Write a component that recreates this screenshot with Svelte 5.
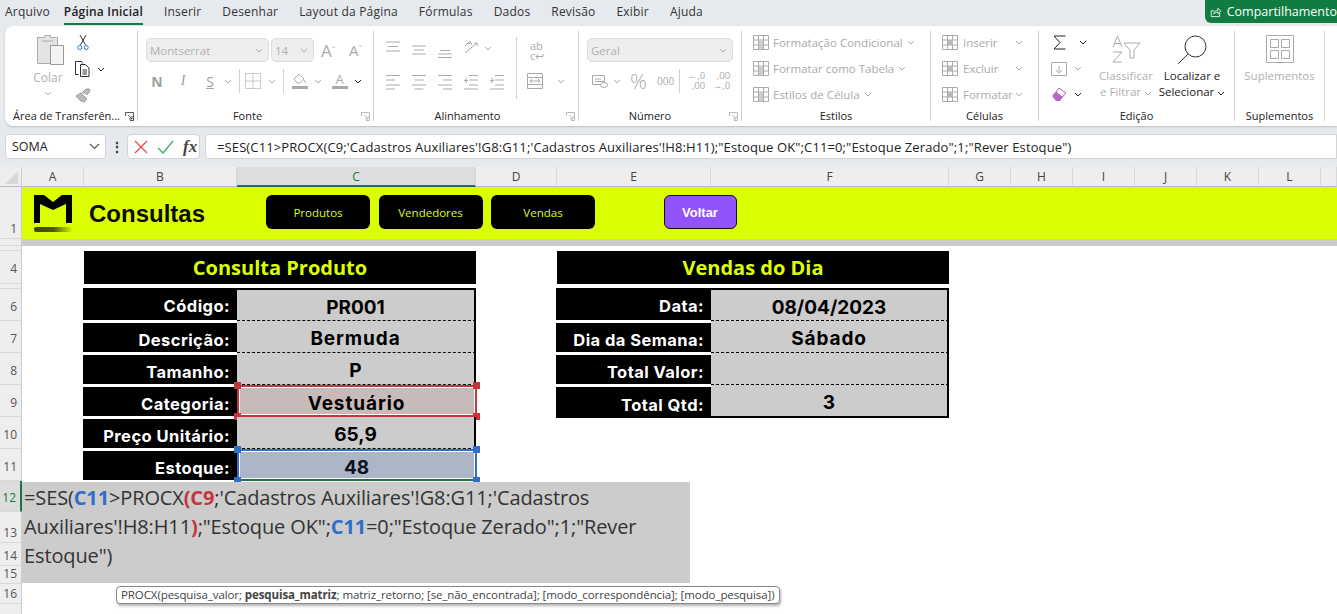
<script>
  const tabs = ['Arquivo', 'Página Inicial', 'Inserir', 'Desenhar', 'Layout da Página', 'Fórmulas', 'Dados', 'Revisão', 'Exibir', 'Ajuda']
  const cols = ['A', 'B', 'C', 'D', 'E', 'F', 'G', 'H', 'I', 'J', 'K', 'L']
  const rowHeads = ['1', '', '', '4', '', '6', '7', '8', '9', '10', '11', '12', '13', '14', '15', '16', '17']
  const midRows = ['4', '6', '7', '8', '9', '10', '11', '12']

  const produto = [
    { row: 6, label: 'Código:', value: 'PR001' },
    { row: 7, label: 'Descrição:', value: 'Bermuda', word: true },
    { row: 8, label: 'Tamanho:', value: 'P' },
    { row: 9, label: 'Categoria:', value: 'Vestuário', word: true, ref: 'red' },
    { row: 10, label: 'Preço Unitário:', value: '65,9' },
    { row: 11, label: 'Estoque:', value: '48', ref: 'blue' }
  ]
  const vendas = [
    { row: 6, label: 'Data:', value: '08/04/2023' },
    { row: 7, label: 'Dia da Semana:', value: 'Sábado', word: true },
    { row: 8, label: 'Total Valor:', value: '' },
    { row: 9, label: 'Total Qtd:', value: '3' }
  ]

  const alignTop = ['M1 4h14M3 8.500h10M1 13h14', 'M1 8h14M3 12h10M1 16h14', 'M3 12.500h10M1 16h14M1 19.500h14']
  const alignSide = ['M1 3.500h14M1 8h9M1 13h14M1 17h9', 'M1 3.500h14M3.500 8h9M1 13h14M3.500 17h9', 'M1 3.500h14M6 8h9M1 13h14M6 17h9',
    'M6 3.500h9M6 8h9M6 13h9M1 17h14M4 6L1.500 8.500 4 11M1.500 8.500h3.500', 'M6 3.500h9M6 8h9M6 13h9M1 17h14M2 6l2.500 2.500L2 11M1 8.500h3.500']
  const stylesList = ['Formatação Condicional', 'Formatar como Tabela', 'Estilos de Célula']
  const cellsList = ['Inserir', 'Excluir', 'Formatar']
</script>

{#snippet chev(dark = false)}
  <svg class="chev" class:dark width="8" height="5" viewBox="0 0 8 5"><path d="M1 1l3 3 3-3" fill="none" stroke="currentColor" stroke-width="1" /></svg>
{/snippet}

{#snippet launcher(dark = false)}
  <svg class="launcher" width="9" height="9" viewBox="0 0 9 9"><path d="M.5 4V.5H8.500V8.500H5M3 3l4 4M7 4v3H4" fill="none" stroke={dark ? '#555' : '#bbb'} /></svg>
{/snippet}

<div class="page">
  <header class="tabs">
    {#each tabs as tab, i}
      <span class="tab" class:active={i === 1}>{tab}</span>
    {/each}
    <button class="share">
      <svg width="14" height="14" viewBox="0 0 14 14" fill="none" stroke="#fff"><path d="M5 5.500H1.500v7h10V8M4.500 9.500C5 6.500 7 5 9.500 5V2.500L13 6 9.500 9V7C7.500 7 6 8 4.500 9.500z" /></svg>
      Compartilhamento
    </button>
  </header>

  <section class="ribbon">
    <div class="group g-clip">
      <div class="content clip">
        <div class="paste">
          <svg width="28" height="32" viewBox="0 0 28 32" fill="none" stroke="#aaa"><path d="M.5 3.500h7v-2h6v2h7v26H.5z" fill="#e4e4e4" /><path d="M5 7h11" /><path d="M13.500 11.500h13v19h-13z" fill="#f4f4f4" stroke="#999" /></svg>
          <span>Colar</span>
          {@render chev()}
        </div>
        <div class="clip-tools">
          <svg class="scissors" width="12" height="17" viewBox="0 0 12 17" fill="none" stroke="#333"><path d="M3 1l5.500 10M9 1L3.500 11" /><circle cx="2.800" cy="13.500" r="2" stroke="#2b79c2" /><circle cx="9.200" cy="13.500" r="2" stroke="#2b79c2" /></svg>
          <div class="with-chev">
            <svg width="15" height="16" viewBox="0 0 15 16" fill="none" stroke="#333"><path d="M3.500 13.500h-3V.5h6l1 2" /><path d="M5.500 3.500h5l3.500 3.500v8.500H5.500zM7.500 9h4.500M7.500 11h4.500M7.500 13h4.500" /></svg>
            {@render chev(true)}
          </div>
          <svg width="17" height="16" viewBox="0 0 17 16" fill="#bbb" stroke="#999"><path d="M1 9l5-3 6 6-3 3C7 15 3 12 1 9zM7 6l4-4 3 0 1 2-3 4" /></svg>
        </div>
      </div>
      <div class="label">Área de Transferên...</div>
      {@render launcher(true)}
    </div>

    <div class="group g-font">
      <div class="content font-rows">
        <div class="fr">
          <div class="select s-font">Montserrat {@render chev()}</div>
          <div class="select s-size">14 {@render chev()}</div>
          <span class="grow-a">A<sup>ˆ</sup></span>
          <span class="grow-a small">A<sup>ˇ</sup></span>
        </div>
        <div class="fr tools">
          <b class="t-n">N</b>
          <i class="t-i">I</i>
          <u class="t-s">S</u>
          {@render chev()}
          <span class="vsep"></span>
          <svg class="borders" width="16" height="16" viewBox="0 0 16 16" fill="none" stroke="#999" stroke-dasharray="1 1"><path d="M.5.500h15v15H.5zM8 .5v15M.5 8h15" /></svg>
          {@render chev()}
          <span class="vsep"></span>
          <span class="swatch">
            <svg width="14" height="12" viewBox="0 0 14 12" fill="none" stroke="#aaa"><path d="M1 6l5-5 5 5-4 4H4zM11 7l2 3" /></svg>
            <em></em>
          </span>
          {@render chev()}
          <span class="swatch text">A<em></em></span>
          {@render chev(true)}
        </div>
      </div>
      <div class="label">Fonte</div>
      {@render launcher()}
    </div>

    <div class="group g-align">
      <div class="content align-grid">
        <div class="ar">
          {#each alignTop as d}
            <svg width="16" height="20" viewBox="0 0 16 20" fill="none" stroke="#aaa"><path {d} /></svg>
          {/each}
          <svg width="16" height="20" viewBox="0 0 16 20" fill="none" stroke="#aaa"><path d="M2 15L14 5M14 5h-3M14 5v3M2 8l5-5 2 4M3.500 5.500h4" /></svg>
          {@render chev()}
        </div>
        <div class="ar">
          {#each alignSide as d}
            <svg width="16" height="20" viewBox="0 0 16 20" fill="none" stroke="#aaa"><path {d} /></svg>
          {/each}
        </div>
        <div class="align-side">
          <span class="wrap">ab<br />c↩</span>
          <div class="with-chev merge">
            <svg width="16" height="16" viewBox="0 0 16 16" fill="none" stroke="#aaa"><path d="M.5.500h15v15H.5zM.5 4.500h15M.5 11.500h15M3 8h10M5 6L3 8l2 2M11 6l2 2-2 2" /></svg>
            {@render chev()}
          </div>
        </div>
      </div>
      <div class="label">Alinhamento</div>
      {@render launcher()}
    </div>

    <div class="group g-num">
      <div class="content num-rows">
        <div class="select s-geral">Geral {@render chev()}</div>
        <div class="nr">
          <svg width="16" height="13" viewBox="0 0 16 13" fill="none" stroke="#aaa"><path d="M.5.500h12v9H.5z" /><path d="M3 6.500h9M3 4h6" /><ellipse cx="12" cy="10" rx="3.500" ry="2.500" fill="#fff" /></svg>
          {@render chev()}
          <span class="pct">%</span>
          <span class="mil">000</span>
          <span class="vsep"></span>
          <span class="dec"><i>←,0</i><i>,00</i></span>
          <span class="dec"><i>,00</i><i>→,0</i></span>
        </div>
      </div>
      <div class="label">Número</div>
      {@render launcher()}
    </div>

    <div class="group g-styles">
      <div class="content list">
        {#each stylesList as item}
          <div class="li">
            <svg width="16" height="15" viewBox="0 0 16 15" fill="none" stroke="#aaa"><path d="M.5.500h15v14H.5zM.5 5h15M.5 10h15M5.500.5v14M10.500.5v14" /><path d="M6 5.500h4v9H6z" fill="#ccc" stroke="none" /></svg>
            <span>{item}</span>
            {@render chev()}
          </div>
        {/each}
      </div>
      <div class="label">Estilos</div>
    </div>

    <div class="group g-cells">
      <div class="content list">
        {#each cellsList as item}
          <div class="li">
            <svg width="16" height="15" viewBox="0 0 16 15" fill="none" stroke="#aaa"><path d="M.5.500h15v14H.5zM.5 5h15M.5 10h15M5.500.5v14M10.500.5v14" /><path d="M6 5h5v5H6z" fill="#bbb" stroke="none" /></svg>
            <span class="cell-name">{item}</span>
            {@render chev()}
          </div>
        {/each}
      </div>
      <div class="label">Células</div>
    </div>

    <div class="group g-edit">
      <div class="content edit">
        <div class="edit-tools">
          <div class="with-chev sum">
            <svg width="13" height="15" viewBox="0 0 13 15" fill="none" stroke="#222"><path d="M12.500 1H1l6 6.500L1 14h11.500" /></svg>
            {@render chev(true)}
          </div>
          <div class="with-chev">
            <svg width="16" height="14" viewBox="0 0 16 14" fill="none" stroke="#aaa"><path d="M.5.500h15v13H.5zM8 4v7M5 8l3 3 3-3" /></svg>
            {@render chev()}
          </div>
          <div class="with-chev">
            <svg width="16" height="15" viewBox="0 0 16 15"><path d="M1 9l7-8 7 5-6 8H5z" fill="#b565c4" /><path d="M5 5l6 5 4-4-7-5z" fill="#fff" stroke="#b565c4" /></svg>
            {@render chev(true)}
          </div>
        </div>
        <div class="big off">
          <svg width="29" height="28" viewBox="0 0 29 28" fill="none" stroke="#aaa"><path d="M1 12L5.500 1 10 12M2.500 8.500h6M1 17h9L1 27h9" /><path d="M12 8h16l-6 7v8h-4v-8z" /></svg>
          <span>Classificar<br />e Filtrar {@render chev()}</span>
        </div>
        <div class="big find">
          <svg width="30" height="30" viewBox="0 0 30 30" fill="none" stroke="#333"><circle cx="18.500" cy="11.500" r="10.500" /><path d="M11 19L1 29" /></svg>
          <span>Localizar e<br />Selecionar {@render chev(true)}</span>
        </div>
      </div>
      <div class="label">Edição</div>
    </div>

    <div class="group g-add">
      <div class="content big off">
        <svg width="28" height="28" viewBox="0 0 28 28" fill="none" stroke="#aaa"><path d="M.5.500h27v27H.5z" /><path d="M4.500 4.500h8v8h-8zM15.500 4.500h8v8h-8zM4.500 15.500h8v8h-8zM15.500 15.500h8v8h-8z" /></svg>
        <span>Suplementos</span>
      </div>
      <div class="label">Suplementos</div>
    </div>
  </section>

  <section class="formula">
    <div class="namebox">SOMA
      <svg width="11" height="7" viewBox="0 0 11 7"><path d="M1 1l4.500 4.500L10 1" fill="none" stroke="#555" stroke-width="1.200" /></svg>
    </div>
    <span class="dots">⋮</span>
    <div class="fx-box">
      <svg width="14" height="14" viewBox="0 0 14 14"><path d="M1 1l12 12M13 1L1 13" stroke="#e5484d" stroke-width="1.200" /></svg>
      <svg width="17" height="14" viewBox="0 0 17 14"><path d="M1 8l5 5L16 1" fill="none" stroke="#3ea862" stroke-width="1.200" /></svg>
      <span class="fx">fx</span>
    </div>
    <div class="input">=SES(C11&gt;PROCX(C9;'Cadastros Auxiliares'!G8:G11;'Cadastros Auxiliares'!H8:H11);"Estoque OK";C11=0;"Estoque Zerado";1;"Rever Estoque")</div>
  </section>

  <section class="sheet">
    <div class="corner"><svg width="16" height="16" viewBox="0 0 16 16"><path d="M16 3v13H3z" fill="#d8d8d8" /></svg></div>
    {#each cols as col, i}
      <div class="colhead" class:current={col === 'C'} style="grid-column: {i + 2}">{col}</div>
    {/each}
    <div class="colhead" style="grid-column: 14"></div>

    {#each rowHeads as head, i}
      <div class="rowhead" class:editing={head === '12'} class:mid={midRows.includes(head)} style="grid-row: {i + 2}">{head}</div>
    {/each}

    <div class="banner">
      <svg class="logo" width="40" height="38" viewBox="0 0 40 38">
        <defs>
          <linearGradient id="logo-shade">
            <stop offset="0" stop-color="#3f4600" />
            <stop offset=".5" stop-color="#4d5600" />
            <stop offset="1" stop-color="#dcff00" />
          </linearGradient>
        </defs>
        <path d="M1 0h10l9 7 9-7h10v28h-6V9L20 15 7 9v19H1z" fill="#000" />
        <rect x="1" y="32" width="39" height="5" rx="2" fill="url(#logo-shade)" />
      </svg>
      <h1>Consultas</h1>
      <button class="nav first">Produtos</button>
      <button class="nav">Vendedores</button>
      <button class="nav">Vendas</button>
      <button class="back">Voltar</button>
    </div>
    <div class="band"></div>

    <div class="title t-left">Consulta Produto</div>
    <div class="title t-right">Vendas do Dia</div>

    {#each produto as item, i}
      <div class="lbl" class:first={i === 0} style="grid-row: {item.row + 1}; grid-column: 3">{item.label}</div>
      <div class="val {item.ref ?? ''}" class:first={i === 0} class:word={item.word} style="grid-row: {item.row + 1}; grid-column: 4">
        {item.value}
        {#if item.ref}
          <i class="h tl"></i><i class="h tr"></i><i class="h bl"></i><i class="h br"></i>
        {/if}
      </div>
    {/each}

    {#each vendas as item, i}
      <div class="lbl" class:first={i === 0} class:last={i === vendas.length - 1} style="grid-row: {item.row + 1}; grid-column: 6">{item.label}</div>
      <div class="val" class:first={i === 0} class:last={i === vendas.length - 1} class:word={item.word} style="grid-row: {item.row + 1}; grid-column: 7">{item.value}</div>
    {/each}

    <div class="editor">=SES(<b class="blue">C11</b>&gt;PROCX<b class="red">(C9</b>;'Cadastros Auxiliares'!G8:G11;'Cadastros Auxiliares'!H8:H11<b class="red">)</b>;"Estoque OK";<b class="blue">C11</b>=0;"Estoque Zerado";1;"Rever Estoque")</div>
    <div class="tip">PROCX(pesquisa_valor; <b>pesquisa_matriz</b>; matriz_retorno; [se_não_encontrada]; [modo_correspondência]; [modo_pesquisa])</div>
  </section>
</div>

<style>
  :global(body) {
    overflow: hidden;
    background: #fff;
  }

  .page {
    width: 1337px;
    height: 614px;
    overflow: hidden;
    background: #e6e9ee;
    font-family: "Open Sans", "Noto Sans", sans-serif;
    font-size: 12px;
    color: #222;
  }

  button {
    font-family: inherit;
    border: none;
    cursor: pointer;
  }

  .tabs {
    display: flex;
    align-items: flex-start;
    gap: 21px;
    height: 26px;
    padding-left: 5px;
    box-sizing: border-box;
  }

    .tab {
      height: 23px;
      line-height: 24px;
      letter-spacing: .2px;
      color: #333;
      white-space: nowrap;
    }

    .tab.active {
      margin-left: -7px;
      font-weight: 600;
      border-bottom: 2px solid #107c41;
      color: #222;
    }

  .share {
    display: flex;
    align-items: center;
    gap: 5px;
    margin-left: auto;
    height: 23px;
    width: 132px;
    padding: 0 0 0 5px;
    white-space: nowrap;
    color: #fff;
    font-size: 12.500px;
    background: #107c41;
    border-radius: 0 0 0 6px;
  }

  .ribbon {
    display: flex;
    height: 100px;
    margin-left: 5px;
    padding: 5px 0;
    box-sizing: border-box;
    background: #fff;
    border-radius: 8px 0 0 8px;
    box-shadow: 0 1px 2px rgba(0, 0, 0, .2);
  }

    .group {
      position: relative;
      flex: none;
      display: flex;
      flex-direction: column;
      box-sizing: border-box;
      height: 90px;
      border-right: 1px solid #d0d0d0;
    }

    .content {
      flex: 1;
      min-height: 0;
    }

    .label {
      height: 12px;
      line-height: 12px;
      margin-bottom: -1px;
      text-align: center;
      font-size: 11px;
      color: #222;
      white-space: nowrap;
    }

    .launcher {
      position: absolute;
      right: 3px;
      bottom: 0;
    }

    .chev {
      flex: none;
      color: #aaa;
    }

    .chev.dark {
      color: #222;
    }

    .with-chev {
      display: flex;
      align-items: center;
      gap: 7px;
    }

    .select {
      display: flex;
      align-items: center;
      justify-content: space-between;
      box-sizing: border-box;
      height: 24px;
      padding: 0 5px 0 3px;
      background: #eee;
      border: 1px solid #dcdcdc;
      border-radius: 5px;
      color: #b0b0b0;
      font-size: 11.500px;
    }

    .vsep {
      flex: none;
      width: 1px;
      height: 24px;
      background: #d0d0d0;
    }

  .g-clip {
    width: 133px;
  }

  .clip {
    display: flex;
    padding: 3px 0 0 32px;
  }

    .paste {
      display: flex;
      flex-direction: column;
      align-items: center;
      width: 28px;
      color: #b0b0b0;
    }

    .paste span {
      margin: 5px 6px 6px 0;
      line-height: 14px;
    }

    .paste .chev {
      margin-right: 6px;
    }

    .clip-tools {
      display: flex;
      flex-direction: column;
      gap: 10px;
      margin-left: 10px;
    }

    .scissors {
      margin-left: 2px;
    }

  .g-clip .label {
    text-align: left;
    padding-left: 8px;
  }

  .g-font {
    width: 236px;
  }

    .g-font .label {
      padding-right: 16px;
    }

  .font-rows {
    display: flex;
    flex-direction: column;
    gap: 7px;
    padding: 7px 0 0 8px;
  }

    .fr {
      display: flex;
      align-items: center;
      height: 24px;
    }

    .s-font {
      width: 123px;
    }

    .s-size {
      width: 43px;
      margin-left: 2px;
    }

    .grow-a {
      margin-left: 7px;
      width: 28px;
      font-size: 17px;
      color: #aaa;
    }

    .grow-a.small {
      margin-left: 0;
      font-size: 15px;
      width: 20px;
    }

    .grow-a sup {
      font-size: 9px;
      vertical-align: 3px;
    }

    .tools b,
    .tools i,
    .tools u {
      width: 14px;
      font-size: 14px;
      color: #a0a0a0;
      text-align: center;
    }

    .t-n {
      margin-left: 4px;
    }

    .t-i {
      margin-left: 12px;
      font-family: "Liberation Serif", serif;
    }

    .t-s {
      margin-left: 13px;
    }

    .tools .chev,
    .tools .vsep {
      margin-left: 7px;
    }

    .borders {
      flex: none;
      margin-left: 5px;
    }

    .swatch {
      display: flex;
      flex-direction: column;
      align-items: center;
      width: 15px;
      margin-left: 8px;
      line-height: 12px;
      color: #aaa;
      font-size: 13px;
    }

    .swatch.text {
      margin-left: 10px;
    }

    .swatch em {
      display: block;
      width: 16px;
      height: 3px;
      margin-top: 1px;
      background: #aaa;
    }

  .g-align {
    width: 205px;
  }

    .g-align .label {
      padding-right: 17px;
    }

  .align-grid {
    display: grid;
    grid-template-columns: 131px 1fr;
    grid-template-rows: 34px 30px;
    padding: 7px 0 0 11px;
  }

    .ar {
      display: flex;
      align-items: flex-start;
      gap: 10px;
    }

    .ar:first-child .chev {
      margin: 8px 0 0 -5px;
    }

    .align-side {
      grid-column: 2;
      grid-row: 1 / 3;
      display: flex;
      flex-direction: column;
      gap: 12px;
      margin-top: -1px;
      padding-left: 10px;
      height: 62px;
      border-left: 1px solid #d0d0d0;
      color: #aaa;
    }

    .wrap {
      height: 20px;
      margin: 4px 0 0 3px;
      font-size: 11px;
      line-height: 10px;
    }

    .merge {
      gap: 14px;
    }

  .g-num {
    width: 163px;
  }

    .g-num .label {
      padding-right: 20px;
    }

  .num-rows {
    display: flex;
    flex-direction: column;
    gap: 7px;
    padding: 7px 8px 0 8px;
  }

    .s-geral {
      width: 146px;
    }

    .nr {
      display: flex;
      align-items: center;
      height: 24px;
      padding-left: 5px;
      color: #aaa;
    }

    .nr .chev {
      margin-left: 5px;
    }

    .pct {
      width: 18px;
      margin-left: 9px;
      font-size: 21px;
      font-weight: 300;
    }

    .mil {
      margin-left: 9px;
      font-size: 10px;
    }

    .nr .vsep {
      margin-left: 5px;
    }

    .dec {
      display: flex;
      flex-direction: column;
      margin-left: 5px;
      width: 20px;
      font-size: 9.500px;
      line-height: 10px;
      text-align: right;
    }

    .dec i {
      font-style: normal;
    }

  .list {
    display: flex;
    flex-direction: column;
    gap: 10px;
    padding: 3px 0 0 11px;
  }

    .li {
      display: flex;
      align-items: center;
      gap: 4px;
      height: 16px;
      color: #aaa;
      font-size: 11.500px;
      white-space: nowrap;
    }

  .g-styles {
    width: 189px;
  }

  .g-cells {
    width: 108px;
  }

    .g-cells .li {
      gap: 5px;
    }

    .cell-name {
      width: 47px;
    }

  .g-edit {
    width: 196px;
  }

  .edit {
    display: flex;
    padding-left: 12px;
  }

    .edit-tools {
      display: flex;
      flex-direction: column;
      gap: 11px;
      width: 43px;
      padding-top: 4px;
    }

    .edit-tools .with-chev {
      height: 15px;
    }

    .sum {
      padding-left: 2px;
      gap: 13px;
    }

    .big {
      display: flex;
      flex-direction: column;
      align-items: center;
      padding-top: 4px;
      text-align: center;
      font-size: 11.500px;
      line-height: 16px;
      white-space: nowrap;
    }

    .big span {
      margin-top: 5px;
    }

    .edit .big {
      width: 64px;
    }

    .edit .find {
      margin-left: 2px;
    }

    .big.find span {
      margin-top: 3px;
    }

    .big.off {
      color: #b0b0b0;
    }

  .g-add {
    width: 90px;
  }

  .formula {
    display: flex;
    align-items: center;
    height: 41px;
    padding-left: 5px;
    box-sizing: border-box;
  }

    .namebox,
    .fx-box,
    .input {
      display: flex;
      align-items: center;
      box-sizing: border-box;
      height: 25px;
      background: #fff;
      border: 1px solid #d4d4d4;
      border-radius: 4px;
    }

    .namebox {
      justify-content: space-between;
      width: 101px;
      padding: 0 5px 0 6px;
      font-size: 12.500px;
    }

    .dots {
      width: 21px;
      text-align: center;
      font-weight: 600;
    }

    .fx-box {
      gap: 9px;
      width: 73px;
      padding-left: 6px;
    }

    .fx {
      font-family: "Liberation Serif", serif;
      font-style: italic;
      font-weight: 700;
      font-size: 17px;
      color: #444;
    }

    .input {
      flex: 1;
      margin-left: 5px;
      padding-left: 11px;
      border-radius: 4px 0 0 4px;
      font-size: 13px;
      letter-spacing: .115px;
      white-space: nowrap;
    }

  .sheet {
    position: relative;
    display: grid;
    grid-template-columns: 22px 62px 153px 239px 81px 154px 238px 62px 62px 62px 62px 62px 62px 16px;
    grid-template-rows: 20px 52px 7px 5px 33px 5px 32px 32px 32px 32px 32px 32px 31px 31px 23px 18px 20px 30px;
    height: 447px;
    background: #fff;
    font-family: Inter, "Open Sans", sans-serif;
  }

    .corner {
      grid-column: 1;
      grid-row: 1;
      display: flex;
      align-items: flex-end;
      justify-content: flex-end;
      padding: 0 3px 2px 0;
      background: #eee;
      border-right: 1px solid #ccc;
      border-bottom: 1px solid #bbb;
      box-sizing: border-box;
    }

    .colhead {
      grid-row: 1;
      box-sizing: border-box;
      text-align: center;
      line-height: 19px;
      background: #eee;
      border-right: 1px solid #d8d8d8;
      border-bottom: 1px solid #bbb;
      font-family: "Open Sans", sans-serif;
      color: #444;
    }

    .colhead.current {
      background: #ddd;
      color: #107c41;
      border-bottom: 2px solid #217346;
    }

    .rowhead {
      grid-column: 1;
      box-sizing: border-box;
      overflow: hidden;
      padding-right: 4px;
      display: flex;
      align-items: flex-end;
      justify-content: flex-end;
      line-height: 18px;
      background: #eee;
      border-right: 1px solid #ccc;
      border-bottom: 1px solid #d8d8d8;
      font-family: "Open Sans", sans-serif;
      color: #555;
    }

    .rowhead.mid {
      align-items: center;
      padding-top: 4px;
    }

    .rowhead.editing {
      color: #107c41;
      background: #ddd;
      border-right: 2px solid #217346;
    }

  .banner {
    grid-column: 2 / -1;
    grid-row: 2;
    display: flex;
    align-items: flex-start;
    padding: 8px 0 0 11px;
    background: #dcff00;
  }

    .logo {
      flex: none;
      margin-right: 16px;
    }

    h1 {
      margin: 5px 0 0;
      width: 177px;
      font-family: "Liberation Sans", sans-serif;
      font-size: 24px;
      line-height: 28px;
      color: #0b0b0b;
    }

    .nav {
      width: 104px;
      height: 34px;
      margin-right: 8.500px;
      background: #000;
      color: #dcff00;
      font-size: 11.500px;
      border-radius: 6px;
      font-family: "Open Sans", sans-serif;
    }

    .back {
      width: 73px;
      height: 34px;
      margin-left: 60px;
      background: #9253ff;
      color: #fff;
      font-size: 13px;
      font-weight: 700;
      border: 1px solid #111;
      border-radius: 6px;
      font-family: "Liberation Sans", sans-serif;
    }

  .band {
    grid-column: 2 / -1;
    grid-row: 3;
    background: #ccc;
  }

  .title {
    grid-row: 5;
    display: flex;
    align-items: center;
    justify-content: center;
    background: #000;
    color: #dcff00;
    font-family: "Open Sans", sans-serif;
    font-size: 20px;
    font-weight: 700;
  }

    .t-left {
      grid-column: 3 / 5;
    }

    .t-right {
      grid-column: 6 / 8;
    }

  .lbl {
    display: flex;
    align-items: center;
    justify-content: flex-end;
    margin: 2px -1px 1px -1px;
    padding: 4px 8px 0 0;
    background: #000;
    color: #fff;
    font-size: 16.500px;
    font-weight: 700;
    letter-spacing: .45px;
    white-space: nowrap;
  }

    .lbl.first {
      margin-top: -1px;
    }

    .lbl.last {
      margin-bottom: -1px;
    }

  .val {
    position: relative;
    display: flex;
    align-items: center;
    justify-content: center;
    box-sizing: border-box;
    padding-top: 4px;
    background: #ccc;
    border-right: 2px solid #000;
    border-bottom: 1px dashed #000;
    color: #000;
    font-size: 19px;
    font-weight: 700;
  }

    .val.word {
      letter-spacing: .9px;
    }

    .val.first {
      margin-top: -1px;
      border-top: 2px solid #000;
    }

    .val.last {
      margin-bottom: -1px;
      border-bottom: 2px solid #000;
    }

    .val.red,
    .val.blue {
      border: none;
    }

    .val.red {
      background: #c9baba;
    }

    .val.blue {
      background: #adb5c9;
      color: #0b1220;
    }

    .val.red::before,
    .val.blue::before {
      content: '';
      position: absolute;
      inset: 0 -1px 0 0;
      border: 2px solid #c4363e;
      box-shadow: inset 0 0 0 1px #fff;
    }

    .val.blue::before {
      border-color: #2f6fc8;
      border-bottom-color: #217346;
    }

    .h {
      position: absolute;
      width: 7px;
      height: 7px;
      background: #2f6fc8;
    }

    .val.red .h {
      background: #c4363e;
    }

    .tl {
      left: -3px;
      top: -3px;
    }

    .tr {
      right: -4px;
      top: -3px;
    }

    .bl {
      left: -3px;
      bottom: -3px;
    }

    .br {
      right: -4px;
      bottom: -3px;
    }

  .editor {
    position: absolute;
    left: 22px;
    top: 315px;
    box-sizing: border-box;
    width: 668px;
    height: 101px;
    padding: 1px 4px 0 2px;
    background: #ccc;
    font-family: "Open Sans", sans-serif;
    font-size: 20px;
    line-height: 29px;
    letter-spacing: -.13px;
    color: #333;
  }

    .editor b.blue {
      color: #2f6fc8;
    }

    .editor b.red {
      color: #c4363e;
    }

  .tip {
    position: absolute;
    left: 116px;
    top: 419px;
    box-sizing: border-box;
    width: 664px;
    height: 18px;
    padding-left: 4px;
    background: #fff;
    border: 1px solid #888;
    border-radius: 4px;
    box-shadow: 1px 2px 3px rgba(0, 0, 0, .3);
    font-family: "Open Sans", sans-serif;
    font-size: 11.500px;
    line-height: 16px;
    letter-spacing: -.09px;
    white-space: nowrap;
    color: #444;
  }
</style>
